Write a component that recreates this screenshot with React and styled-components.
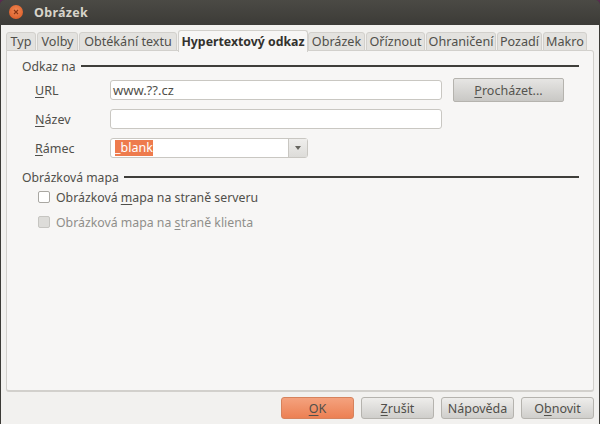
import React from 'react'
import styled, { createGlobalStyle } from 'styled-components'

const GlobalStyle = createGlobalStyle`
    html, body {
        margin: 0;
        padding: 0;
        background: #5b2a52;
    }
    body {
        font-family: "Noto Sans", "Open Sans", sans-serif;
        font-size: 12px;
        color: #3c3b37;
    }
`

const Window = styled.div`
    width: 600px;
    height: 424px;
    display: flex;
    flex-direction: column;
    border-radius: 5px 5px 0 0;
    overflow: hidden;
    background: #3c3b37;
`

const TitleBar = styled.div`
    height: 25px;
    flex: none;
    display: flex;
    align-items: center;
    gap: 10px;
    padding: 0 0 1px 9px;
    box-sizing: border-box;
    background: linear-gradient(#4b4a45, #3c3b37);
`

const CloseButton = styled.div`
    width: 14px;
    height: 14px;
    border-radius: 50%;
    background: radial-gradient(circle at 50% 40%, #f08a55, #d9541f);
    display: flex;
    align-items: center;
    justify-content: center;
`

const Title = styled.div`
    color: #d8d4ca;
    font-weight: 700;
    font-size: 12.5px;
    letter-spacing: 0.3px;
    margin-left: 1px;
`

const Body = styled.div`
    flex: 1;
    margin: 0 1px;
    background: #f2f1ef;
    display: flex;
    flex-direction: column;
    padding: 6px 5px 5px 5px;
    min-height: 0;
`

const TabRow = styled.div`
    display: flex;
    align-items: flex-end;
    height: 20px;
    padding-left: 0;
    position: relative;
    z-index: 1;
`

const Tab = styled.div`
    width: ${p => p.$w}px;
    margin-left: ${p => p.$gap ?? 1}px;
    height: ${p => (p.$active ? 22 : 19)}px;
    box-sizing: border-box;
    display: flex;
    align-items: center;
    justify-content: center;
    white-space: nowrap;
    font-size: ${p => (p.$active ? 12.3 : 12.6)}px;
    font-weight: ${p => (p.$active ? 700 : 400)};
    color: ${p => (p.$active ? '#33322e' : '#504f4a')};
    background: ${p => (p.$active ? '#f7f6f5' : '#e3e2df')};
    border: 1px solid #d2d0cc;
    border-bottom: ${p => (p.$active ? 'none' : '1px solid #d2d0cc')};
    border-radius: 3px 3px 0 0;
    margin-bottom: ${p => (p.$active ? -1 : 0)}px;
`

const Panel = styled.div`
    flex: 1;
    min-height: 0;
    margin-top: -1px;
    background: #f7f6f5;
    border: 1px solid #d2d0cc;
    border-bottom-width: 2px;
    border-radius: 0 3px 3px 3px;
    padding: 7px 14px 0 15px;
    box-sizing: border-box;
`

const SectionHead = styled.div`
    display: flex;
    align-items: center;
    gap: 5px;
    height: 16px;
    color: #504f4a;
    font-size: 12.2px;
    margin-top: ${p => p.$top ?? 0}px;

    &::after {
        content: '';
        flex: 1;
        height: 2px;
        background: #3f3e3a;
    }
`

const FormGrid = styled.div`
    display: grid;
    grid-template-columns: 75px 332px 122px;
    grid-auto-rows: 20px;
    row-gap: 9px;
    align-items: center;
    padding: 6px 0 0 13px;
`

const Label = styled.div`
    font-size: 12.5px;
    color: #504f4a;
`

const Input = styled.div`
    height: 20px;
    box-sizing: border-box;
    background: #fff;
    border: 1px solid #c9c7c2;
    border-radius: 3px;
    padding: 0 6px 0 2px;
    line-height: 18px;
    font-size: 13px;
    color: #504f4a;
`

const BrowseButton = styled.div`
    margin-left: 11px;
    width: 111px;
    height: 24px;
    box-sizing: border-box;
    border: 1px solid #b5b3ae;
    border-radius: 2px;
    background: linear-gradient(#e6e5e3, #c9c8c5);
    display: flex;
    align-items: center;
    justify-content: center;
    font-size: 12.5px;
    color: #55544f;
`

const Combo = styled.div`
    width: 198px;
    height: 20px;
    display: flex;
    box-sizing: border-box;
    background: #fff;
    border: 1px solid #c9c7c2;
    border-radius: 3px;
    font-size: 12.5px;
`

const ComboText = styled.div`
    flex: 1;
    padding: 1px 0 1px 4px;
    line-height: 16px;
`

const Selected = styled.span`
    display: inline-block;
    height: 16px;
    background: #ee7b4d;
    color: #fff;
`

const ComboArrow = styled.div`
    width: 18px;
    background: linear-gradient(#efeeec, #dddcd9);
    border-left: 1px solid #c9c7c2;
    display: flex;
    align-items: center;
    justify-content: center;

    &::after {
        content: '';
        border: 3.5px solid transparent;
        border-top: 4px solid #66655f;
        border-bottom: none;
    }
`

const CheckRow = styled.div`
    display: flex;
    align-items: center;
    gap: 6px;
    height: 16px;
    margin: ${p => p.$top}px 0 0 16px;
    font-size: 12.3px;
    color: ${p => (p.$disabled ? '#8f8e8a' : '#504f4a')};
`

const CheckBox = styled.div`
    width: 12px;
    height: 12px;
    box-sizing: border-box;
    border: 1px solid ${p => (p.$disabled ? '#c6c5c1' : '#a9a7a2')};
    border-radius: 2px;
    background: ${p => (p.$disabled ? '#dddcd9' : '#fff')};
`

const Footer = styled.div`
    flex: none;
    display: flex;
    justify-content: flex-end;
    gap: 7px;
    padding: 5px 0 0;
    height: 27px;
    box-sizing: border-box;
`

const FootButton = styled.div`
    width: ${p => p.$w}px;
    height: 22px;
    box-sizing: border-box;
    border: 1px solid ${p => (p.$primary ? '#d6825c' : '#b5b3ae')};
    border-radius: 3px;
    background: ${p => (p.$primary
        ? 'linear-gradient(#f4a27e, #ec8053)'
        : 'linear-gradient(#eeedeb, #cfcecb)')};
    display: flex;
    align-items: center;
    justify-content: center;
    font-size: 12.5px;
    color: #504f4a;
`

const Key = styled.span`
    text-decoration: underline;
    text-underline-offset: 2px;
`

const tabs = [
    { name: 'Typ', w: 30, gap: 0 },
    { name: 'Volby', w: 41 },
    { name: 'Obtékání textu', w: 98 },
    { name: 'Hypertextový odkaz', w: 130, active: true },
    { name: 'Obrázek', w: 57, gap: 0 },
    { name: 'Oříznout', w: 59 },
    { name: 'Ohraničení', w: 70 },
    { name: 'Pozadí', w: 45 },
    { name: 'Makro', w: 44 },
]

const App = () => {
    return (
        <>
            <GlobalStyle />
            <Window>
                <TitleBar>
                    <CloseButton>
                        <svg width="6" height="6" viewBox="0 0 6 6">
                            <path d="M1 1 L5 5 M5 1 L1 5" stroke="#8a3412" strokeWidth="1.1" />
                        </svg>
                    </CloseButton>
                    <Title>Obrázek</Title>
                </TitleBar>
                <Body>
                    <TabRow>
                        {tabs.map(({ name, w, gap, active }) => (
                            <Tab key={name} $w={w} $gap={gap} $active={active}>{name}</Tab>
                        ))}
                    </TabRow>
                    <Panel>
                        <SectionHead>Odkaz na</SectionHead>
                        <FormGrid>
                            <Label><Key>U</Key>RL</Label>
                            <Input>www.??.cz</Input>
                            <BrowseButton><span><Key>P</Key>rocházet...</span></BrowseButton>
                            <Label><Key>N</Key>ázev</Label>
                            <Input />
                            <span />
                            <Label><Key>R</Key>ámec</Label>
                            <Combo>
                                <ComboText><Selected>_blank</Selected></ComboText>
                                <ComboArrow />
                            </Combo>
                        </FormGrid>
                        <SectionHead $top={11}>Obrázková mapa</SectionHead>
                        <CheckRow $top={4}>
                            <CheckBox />
                            <span>Obrázková <Key>m</Key>apa na straně serveru</span>
                        </CheckRow>
                        <CheckRow $top={9} $disabled>
                            <CheckBox $disabled />
                            <span>Obrázková mapa na <Key>s</Key>traně klienta</span>
                        </CheckRow>
                    </Panel>
                    <Footer>
                        <FootButton $w={73} $primary><span><Key>O</Key>K</span></FootButton>
                        <FootButton $w={73}><span><Key>Z</Key>rušit</span></FootButton>
                        <FootButton $w={73}>Nápověda</FootButton>
                        <FootButton $w={73}><span>O<Key>b</Key>novit</span></FootButton>
                    </Footer>
                </Body>
            </Window>
        </>
    )
}

export default App
